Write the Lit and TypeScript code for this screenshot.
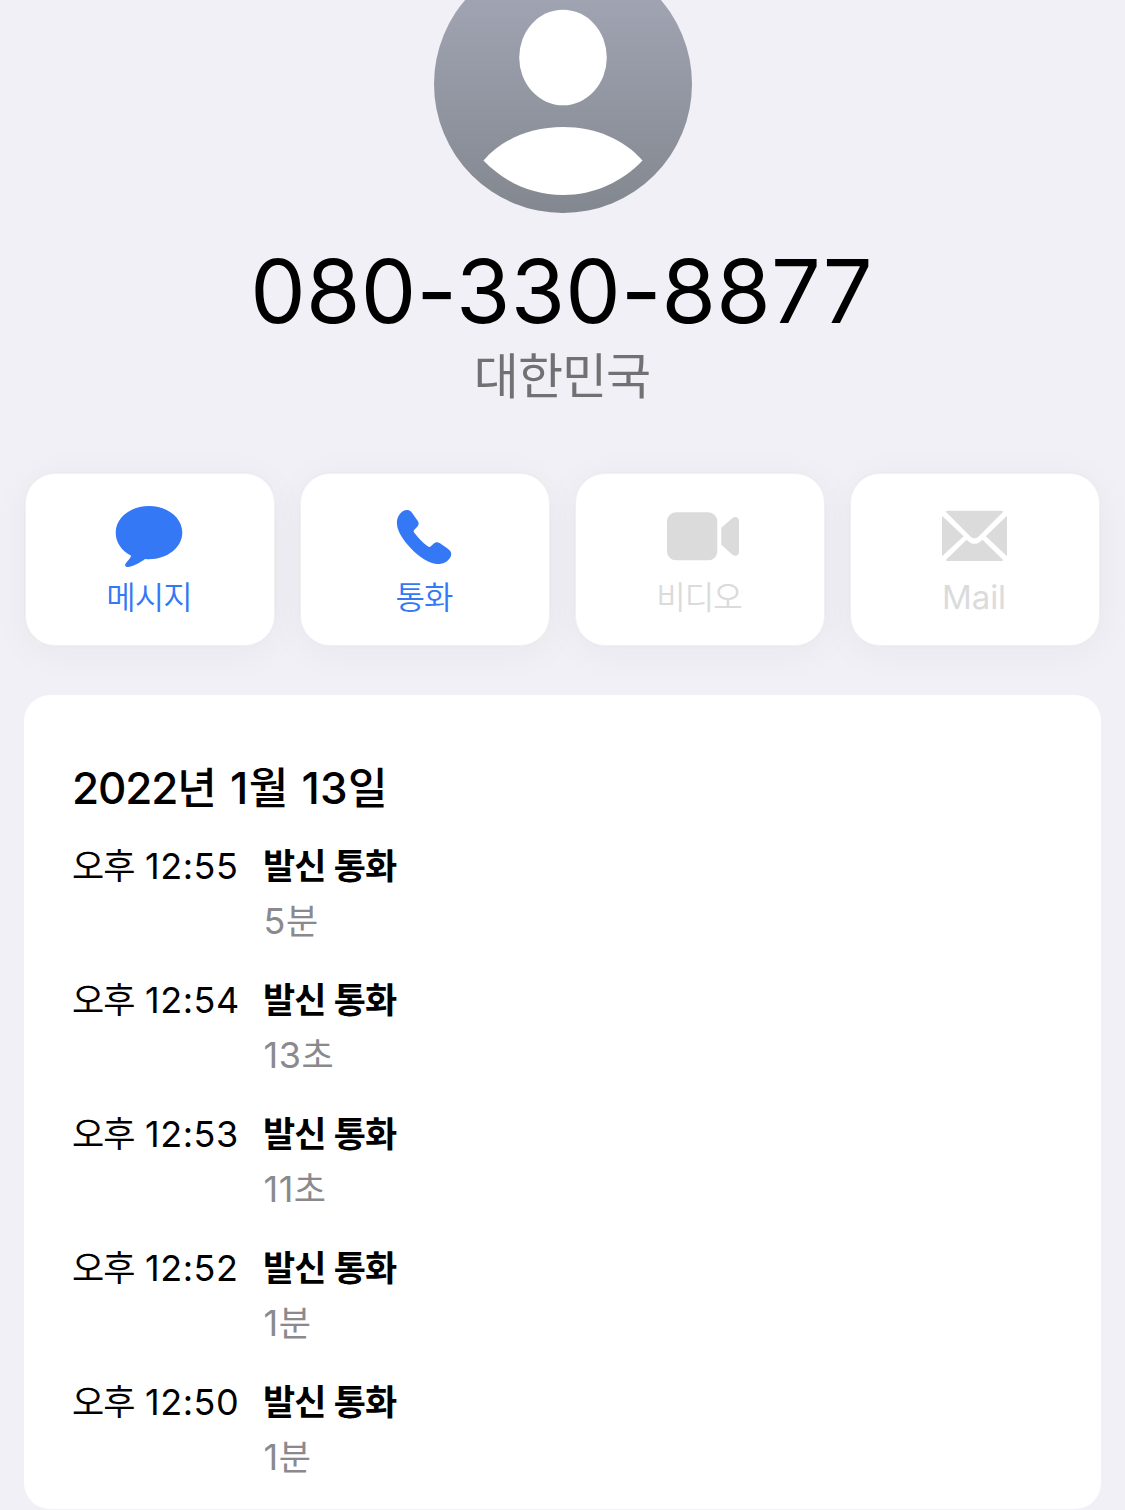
import { LitElement, html, svg, css } from "lit";
import { customElement, property } from "lit/decorators.js";
import { classMap } from "lit/directives/class-map.js";

const runs = (text: string) =>
  text
    .split(/([가-힣]+)/)
    .filter((part) => part !== "")
    .map((part) =>
      /[가-힣]/.test(part)
        ? html`<span class="hangul">${part}</span>`
        : html`<span class="latin">${part}</span>`
    );

const runStyles = css`
  :host {
    font-family: Inter, "Liberation Sans", sans-serif;
  }
  .hangul {
    font-family: "Noto Sans CJK KR", sans-serif;
    line-height: 0;
  }
  .latin {
    line-height: 0;
    white-space: pre;
  }
`;

const icons = {
  message: svg`
    <path d="M34 5C52.5 5 67.300 16.800 67.300 31.500C67.300 46.300 52.500 58.200 34 58.200C32.600 58.200 31.300 58.100 30 58C26.200 60.900 19.500 65 13.200 66C10.200 66.500 9.100 64.200 11 61.900C13.200 59.500 15.400 57.300 16.200 54.800C6.700 49.900 0.700 41.600 0.700 31.500C0.700 16.800 15.500 5 34 5Z"/>`,
  phone: svg`
    <path d="M11.600 9C8 8.900 5.300 10.800 3.500 13.600C1.300 16.700 0.600 20 1 23.500C1.600 30.700 7 39 15 47.500C23.500 56.300 32.500 62.300 41 63C46.500 63.400 51 61.200 53.700 57.300C56 54 55.700 51 53.200 48.900C50 46.300 47.500 44.700 44 42.300C41.500 40.800 39.300 41.100 37.300 43.100L34.800 45.300C33.800 46.100 32.800 46.100 31.700 45.300C26.500 41.500 21.500 36 18.100 31.500C17.400 30.500 17.500 29.700 18.300 28.800L21.300 25.800C22.900 24 23.100 22.200 21.800 20.100L15.800 11.600C14.700 9.900 13.300 9.100 11.600 9Z"/>`,
  video: svg`
    <rect x="0" y="11.300" width="50.300" height="48" rx="9"/>
    <path d="M54.300 26.800L65.200 17.200C68.200 14.700 72 16 72 19.600V51C72 54.600 68.200 55.900 65.200 53.400L54.300 43.800Z"/>`,
  mail: svg`
    <path d="M3.500 10.600C4.500 10 5.700 9.700 7 9.700H58C59.300 9.700 60.500 10 61.500 10.600L36.800 35.200C34 38 31 38 28.200 35.200Z"/>
    <path d="M0 14.700L21.700 35.200L0 55.300Z"/>
    <path d="M65 14.700L43.800 35.200L65 55.300Z"/>
    <path d="M3.600 59.200L24.600 38.700L26 39.900C30.300 43.800 34.700 43.800 39 39.900L40.500 38.700L61.400 59.200C60.400 59.800 59.300 60.100 58 60.100H7C5.700 60.100 4.600 59.800 3.600 59.200Z"/>`,
};

const iconWidths = { message: 68, phone: 56, video: 72, mail: 65 };

type IconName = keyof typeof icons;

@customElement("contact-action")
class ContactAction extends LitElement {
  @property() icon: IconName = "message";
  @property() label = "";
  @property({ type: Boolean }) disabled = false;

  static styles = [
    runStyles,
    css`
      :host {
        display: block;
      }
      .tile {
        display: flex;
        flex-direction: column;
        align-items: center;
        box-sizing: border-box;
        width: 100%;
        height: 173px;
        padding: 27px 0 0;
        border: 1px solid #f1f1f2;
        border-radius: 30px;
        background-color: #fff;
        color: #3478f6;
        box-shadow: 0 0 0 1px rgba(0, 0, 0, 0.012), 0 6px 40px rgba(60, 50, 90, 0.045);
      }
      .disabled {
        color: #dbdbdb;
      }
      svg {
        display: block;
        fill: currentColor;
      }
      .phone {
        margin-left: -3px;
      }
      .message {
        margin-left: -2px;
      }
      .video {
        margin-left: 6px;
      }
      .mail {
        margin-left: -2px;
      }
      .label {
        height: 48px;
        line-height: 48px;
        font-size: 33px;
        letter-spacing: -0.1px;
        white-space: nowrap;
        margin-top: 4px;
        margin-left: -2px;
      }
      .hangul {
        font-size: 32px;
        letter-spacing: -1px;
        font-weight: 350;
      }
    `,
  ];

  render() {
    const w = iconWidths[this.icon];
    return html`<div class=${classMap({ tile: true, disabled: this.disabled })}>
      <svg class=${this.icon} width=${w} height="68" viewBox="0 0 ${w} 68">${icons[this.icon]}</svg>
      <div class="label">${runs(this.label)}</div>
    </div>`;
  }
}

@customElement("call-row")
class CallRow extends LitElement {
  @property() time = "";
  @property() kind = "";
  @property() duration = "";

  static styles = [
    runStyles,
    css`
      :host {
        display: grid;
        grid-template-columns: 191px 1fr;
        grid-template-rows: 55px 55px;
        height: 134px;
        line-height: 55px;
        font-size: 36px;
        white-space: nowrap;
        color: #000;
      }
      .latin {
        letter-spacing: 0.5px;
      }
      .hangul {
        font-size: 35px;
        letter-spacing: -1px;
      }
      .kind .hangul,
      .kind .latin {
        font-weight: 600;
        letter-spacing: -0.9px;
      }
      .duration {
        grid-column: 2;
        padding-left: 0.5px;
        color: #8a8a8e;
      }
    `,
  ];

  render() {
    return html`
      <div class="time">${runs(this.time)}</div>
      <div class="kind">${runs(this.kind)}</div>
      <div class="duration">${runs(this.duration)}</div>
    `;
  }
}

const calls = [
  { time: "오후 12:55", duration: "5분" },
  { time: "오후 12:54", duration: "13초" },
  { time: "오후 12:53", duration: "11초" },
  { time: "오후 12:52", duration: "1분" },
  { time: "오후 12:50", duration: "1분" },
];

@customElement("app-root")
class AppRoot extends LitElement {
  static styles = [
    runStyles,
    css`
      :host {
        display: block;
        box-sizing: border-box;
        width: 1125px;
        height: 1510px;
        overflow: hidden;
        background: #f1f0f6;
      }
      .contact {
        display: flex;
        flex-direction: column;
        align-items: center;
        height: 473px;
      }
      .avatar {
        display: block;
        width: 260px;
        height: 214px;
        margin-left: 1px;
      }
      .number {
        height: 110px;
        margin-top: 22px;
        line-height: 110px;
        font-size: 88px;
        letter-spacing: 0.2px;
        margin-left: -2px;
        color: #000;
        white-space: nowrap;
      }
      .country {
        height: 60px;
        margin-top: 1px;
        margin-left: -1px;
        line-height: 60px;
        font-size: 49px;
        letter-spacing: -1px;
        color: #717174;
      }
      .actions {
        display: grid;
        grid-template-columns: repeat(4, 250px);
        gap: 25px;
        padding-left: 25px;
        height: 222px;
      }
      .history {
        box-sizing: border-box;
        width: 1077px;
        height: 814px;
        margin-left: 24px;
        padding: 63px 48px 0 48px;
        border-radius: 26px;
        background: #fff;
      }
      .date {
        height: 81px;
        line-height: 60px;
        font-size: 44px;
        font-weight: 500;
        color: #000;
        white-space: nowrap;
      }
      .date .latin {
        letter-spacing: 0.4px;
        word-spacing: 2px;
      }
      .date .latin:first-child {
        letter-spacing: -1.1px;
      }
      .date .hangul {
        font-size: 43px;
        letter-spacing: -1px;
      }
    `,
  ];

  render() {
    return html`
      <div class="contact">
        <svg class="avatar" viewBox="433 0 260 214">
          <defs>
            <linearGradient id="shade" x1="0" y1="-45" x2="0" y2="213" gradientUnits="userSpaceOnUse">
              <stop offset="0" stop-color="#a6aab9" />
              <stop offset="1" stop-color="#83878f" />
            </linearGradient>
          </defs>
          <circle cx="563" cy="84" r="129" fill="url(#shade)" />
          <ellipse cx="563" cy="57.500" rx="43.800" ry="47.800" fill="#fff" />
          <path d="M483.500 160.500C502 139.500 530 127 563 127C596 127 624 139.500 642.500 160.500C622 182 594 195 563 195C532 195 504 182 483.500 160.500Z" fill="#fff" />
        </svg>
        <div class="number">${runs("080-330-8877")}</div>
        <div class="country">${runs("대한민국")}</div>
      </div>
      <div class="actions">
        <contact-action icon="message" label="메시지"></contact-action>
        <contact-action icon="phone" label="통화"></contact-action>
        <contact-action icon="video" label="비디오" disabled></contact-action>
        <contact-action icon="mail" label="Mail" disabled></contact-action>
      </div>
      <div class="history">
        <div class="date">${runs("2022년 1월 13일")}</div>
        ${calls.map(
          (call) => html`<call-row .time=${call.time} kind="발신 통화" .duration=${call.duration}></call-row>`
        )}
      </div>
    `;
  }
}
